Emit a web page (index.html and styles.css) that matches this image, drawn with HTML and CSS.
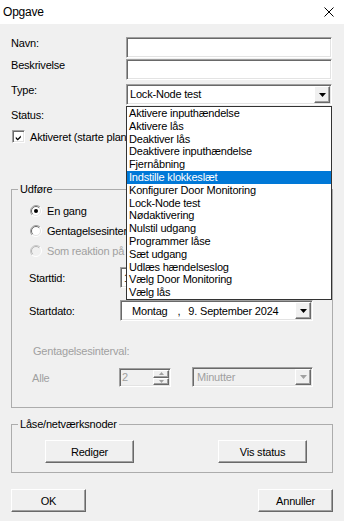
FILE: index.html
```html
<!DOCTYPE html>
<html>
<head>
  <title>Opgave</title>
  <link rel="stylesheet" href="styles.css">
</head>
<body>
  <div class="window">
    <div class="titlebar">
      <span class="title">Opgave</span>
      <svg class="close" width="10" height="10" viewBox="0 0 10 10">
        <path d="M0.5 0.5 L9.5 9.5 M9.5 0.5 L0.5 9.5" stroke="#000" stroke-width="1" fill="none"/>
      </svg>
    </div>

    <div class="content">
      <div class="row row-name">
        <span class="lbl">Navn:</span>
        <div class="field"></div>
      </div>
      <div class="row row-desc">
        <span class="lbl">Beskrivelse</span>
        <div class="field"></div>
      </div>
      <div class="row row-type">
        <span class="lbl">Type:</span>
        <div class="field combo">
          <span class="combo-text">Lock-Node test</span>
          <span class="drop-btn">
            <svg width="7" height="4" viewBox="0 0 7 4"><polygon points="0,0 7,0 3.5,4" fill="#000"/></svg>
          </span>
        </div>
      </div>

      <div class="status">Status:</div>

      <div class="check-row">
        <span class="checkbox">
          <svg width="9" height="9" viewBox="0 0 9 9"><polygon points="1,3.5 3.5,6 7.5,2 7.5,4.5 3.5,8.5 1,6" fill="#000"/></svg>
        </span>
        <span>Aktiveret (starte planlagt opgave)</span>
      </div>

      <fieldset class="group group-run">
        <legend>Udføre</legend>

        <div class="radio-row">
          <svg class="radio" width="12" height="12" viewBox="0 0 12 12">
            <circle cx="6" cy="6" r="5" fill="#fff"/>
            <path d="M10 2 A5.66 5.66 0 0 0 2 10" fill="none" stroke="#a0a0a0"/>
            <path d="M9.2 2.8 A4.5 4.5 0 0 0 2.8 9.2" fill="none" stroke="#696969"/>
            <path d="M2 10 A5.66 5.66 0 0 0 10 2" fill="none" stroke="#fff"/>
            <path d="M2.8 9.2 A4.5 4.5 0 0 0 9.2 2.8" fill="none" stroke="#e3e3e3"/>
            <circle cx="6" cy="6" r="2" fill="#000"/>
          </svg>
          <span>En gang</span>
        </div>
        <div class="radio-row">
          <svg class="radio" width="12" height="12" viewBox="0 0 12 12">
            <circle cx="6" cy="6" r="5" fill="#fff"/>
            <path d="M10 2 A5.66 5.66 0 0 0 2 10" fill="none" stroke="#a0a0a0"/>
            <path d="M9.2 2.8 A4.5 4.5 0 0 0 2.8 9.2" fill="none" stroke="#696969"/>
            <path d="M2 10 A5.66 5.66 0 0 0 10 2" fill="none" stroke="#fff"/>
            <path d="M2.8 9.2 A4.5 4.5 0 0 0 9.2 2.8" fill="none" stroke="#e3e3e3"/>
          </svg>
          <span>Gentagelsesinterval</span>
        </div>
        <div class="radio-row disabled">
          <svg class="radio" width="12" height="12" viewBox="0 0 12 12">
            <circle cx="6" cy="6" r="5" fill="#f0f0f0"/>
            <path d="M10 2 A5.66 5.66 0 0 0 2 10" fill="none" stroke="#c8c8c8"/>
            <path d="M9.2 2.8 A4.5 4.5 0 0 0 2.8 9.2" fill="none" stroke="#b4b4b4"/>
            <path d="M2 10 A5.66 5.66 0 0 0 10 2" fill="none" stroke="#fff"/>
          </svg>
          <span>Som reaktion på hændelse</span>
        </div>

        <div class="pick-row time-row">
          <span class="pick-lbl">Starttid:</span>
          <div class="field picker time">
            <span>12:00:00</span>
          </div>
        </div>
        <div class="pick-row date-row">
          <span class="pick-lbl">Startdato:</span>
          <div class="field picker date">
            <span class="day">Montag</span>
            <span class="comma">,</span>
            <span class="full-date">9. September 2024</span>
            <span class="drop-btn">
              <svg width="7" height="4" viewBox="0 0 7 4"><polygon points="0,0 7,0 3.5,4" fill="#000"/></svg>
            </span>
          </div>
        </div>

        <div class="interval-title">Gentagelsesinterval:</div>
        <div class="interval-row">
          <span class="every">Alle</span>
          <div class="field spin">
            <span class="spin-value">2</span>
            <span class="spin-btns">
              <span class="spin-btn">
                <svg width="5" height="3" viewBox="0 0 5 3"><polygon points="2.5,0 5,3 0,3" fill="#a0a0a0"/></svg>
              </span>
              <span class="spin-btn">
                <svg width="5" height="3" viewBox="0 0 5 3"><polygon points="0,0 5,0 2.5,3" fill="#a0a0a0"/></svg>
              </span>
            </span>
          </div>
          <div class="field combo unit">
            <span class="combo-text">Minutter</span>
            <span class="drop-btn">
              <svg width="7" height="4" viewBox="0 0 7 4"><polygon points="0,0 7,0 3.5,4" fill="#a0a0a0"/></svg>
            </span>
          </div>
        </div>
      </fieldset>

      <fieldset class="group group-nodes">
        <legend>Låse/netværksnoder</legend>
        <div class="node-buttons">
          <button class="btn node-btn">Rediger</button>
          <button class="btn node-btn">Vis status</button>
        </div>
      </fieldset>

      <div class="footer">
        <button class="btn footer-btn default">OK</button>
        <button class="btn footer-btn">Annuller</button>
      </div>
    </div>

    <!-- open Type list, drawn over the form -->
    <ul class="dropdown">
      <li>Aktivere inputhændelse</li>
      <li>Aktivere lås</li>
      <li>Deaktiver lås</li>
      <li>Deaktivere inputhændelse</li>
      <li>Fjernåbning</li>
      <li class="selected">Indstille klokkeslæt</li>
      <li>Konfigurer Door Monitoring</li>
      <li>Lock-Node test</li>
      <li>Nødaktivering</li>
      <li>Nulstil udgang</li>
      <li>Programmer låse</li>
      <li>Sæt udgang</li>
      <li>Udlæs hændelseslog</li>
      <li>Vælg Door Monitoring</li>
      <li>Vælg lås</li>
    </ul>
  </div>
</body>
</html>
```

FILE: styles.css
```css
body {
  margin: 0;
  font-family: "Liberation Sans", Arial, sans-serif;
  font-size: 11px;
  letter-spacing: -0.2px;
  color: #000;
}

.window {
  width: 344px;
  height: 521px;
  background: #f0f0f0;
  position: relative;
  overflow: hidden;
}

.titlebar {
  height: 24px;
  background: #fff;
  display: flex;
  align-items: center;
  justify-content: space-between;
  padding: 0 10px 0 3px;
}

.title {
  font-size: 12px;
  letter-spacing: -0.2px;
}

.content {
  padding: 0 11px;
}

/* sunken field */
.field {
  box-sizing: border-box;
  background: #fff;
  border: 1px solid;
  border-color: #a0a0a0 #fff #fff #a0a0a0;
  box-shadow: inset 1px 1px 0 #696969, inset -1px -1px 0 #e3e3e3;
}

/* raised 3d */
.drop-btn,
.spin-btn,
.btn {
  box-sizing: border-box;
  background: #f0f0f0;
  border: 1px solid;
  border-color: #fff #696969 #696969 #fff;
  box-shadow: inset -1px -1px 0 #a0a0a0;
}

.row {
  display: flex;
  align-items: flex-start;
}

.lbl {
  width: 115px;
  line-height: 13px;
}

.row .field {
  width: 206px;
  height: 21px;
}

.row-name {
  margin-top: 13px;
}

.row-desc {
  margin-top: 1px;
}

.row-type {
  margin-top: 4px;
}

.combo {
  display: flex;
  align-items: center;
  padding: 1px;
}

.combo-text {
  flex: 1;
  padding-left: 2px;
  line-height: 13px;
}

.drop-btn {
  width: 16px;
  height: 17px;
  display: flex;
  align-items: center;
  justify-content: center;
}

.status {
  margin-top: 3px;
  line-height: 14px;
}

.check-row {
  margin-top: 8px;
  height: 13px;
  display: flex;
  align-items: center;
  white-space: nowrap;
}

.checkbox {
  box-sizing: border-box;
  width: 13px;
  height: 13px;
  margin-left: 1px;
  margin-right: 5px;
  padding: 2px;
  display: flex;
  background: #fff;
  border: 1px solid;
  border-color: #a0a0a0 #fff #fff #a0a0a0;
  box-shadow: inset 1px 1px 0 #696969, inset -1px -1px 0 #e3e3e3;
}

.group {
  margin: 0;
  padding: 0;
  border: 1px solid #acacac;
  min-width: 0;
}

.group legend {
  margin-left: 6px;
  padding: 0 2px;
  line-height: 13px;
}

.group-run {
  margin-top: 40px;
  padding: 8px 0 20px 0;
}

.radio-row {
  display: flex;
  align-items: center;
  height: 13px;
  padding-left: 18px;
  white-space: nowrap;
}

.radio-row + .radio-row {
  margin-top: 7px;
}

.radio {
  margin-right: 5px;
}

.disabled {
  color: #a0a0a0;
}

.pick-row {
  display: flex;
  align-items: center;
  padding-left: 17px;
}

.pick-lbl {
  width: 91px;
  line-height: 13px;
  padding-top: 2px;
}

.time-row {
  margin-top: 10px;
}

.date-row {
  margin-top: 12px;
}

.picker {
  height: 21px;
  display: flex;
  align-items: center;
  padding: 1px;
  white-space: nowrap;
}

.time {
  width: 150px;
  padding-left: 3px;
}

.date {
  width: 193px;
}

.day {
  margin-left: 10px;
}

.comma {
  margin-left: 10px;
}

.full-date {
  margin-left: 8px;
  flex: 1;
}

.interval-title {
  margin-top: 24px;
  padding-left: 21px;
  line-height: 13px;
  color: #a0a0a0;
}

.interval-row {
  margin-top: 9px;
  display: flex;
  align-items: center;
  padding-left: 20px;
}

.every {
  width: 87px;
  color: #a0a0a0;
  padding-top: 2px;
}

.spin {
  width: 52px;
  height: 19px;
  background: #f0f0f0;
  padding: 1px;
  display: flex;
}

.spin-value {
  flex: 1;
  color: #a0a0a0;
  line-height: 15px;
  padding-left: 1px;
}

.spin-btns {
  display: flex;
  flex-direction: column;
  width: 16px;
}

.spin-btn {
  height: 8px;
  display: flex;
  align-items: center;
  justify-content: center;
}

.spin-btn + .spin-btn {
  height: 7px;
}

.unit {
  width: 121px;
  height: 20px;
  margin-left: 21px;
  background: #f0f0f0;
  color: #a0a0a0;
}

.unit .combo-text {
  padding-left: 3px;
}

.unit .drop-btn {
  height: 16px;
}

.group-nodes {
  margin-top: 10px;
  padding: 9px 0 9px 0;
}

.node-buttons {
  display: flex;
  gap: 84px;
  padding-left: 33px;
}

.btn {
  font-family: "Liberation Sans", Arial, sans-serif;
  font-size: 11px;
  letter-spacing: -0.2px;
  color: #000;
  height: 23px;
  padding: 0;
}

.node-btn {
  width: 89px;
}

.footer {
  margin-top: 16px;
  display: flex;
  justify-content: space-between;
}

.footer-btn {
  width: 75px;
}

.dropdown {
  position: absolute;
  left: 126px;
  top: 106px;
  width: 206px;
  box-sizing: border-box;
  margin: 0;
  padding: 0;
  list-style: none;
  background: #fff;
  border: 1px solid #333;
  white-space: nowrap;
}

.dropdown li {
  line-height: 12.8px;
  padding-left: 2px;
}

.dropdown .selected {
  background: #0078d7;
  color: #fff;
}
```
